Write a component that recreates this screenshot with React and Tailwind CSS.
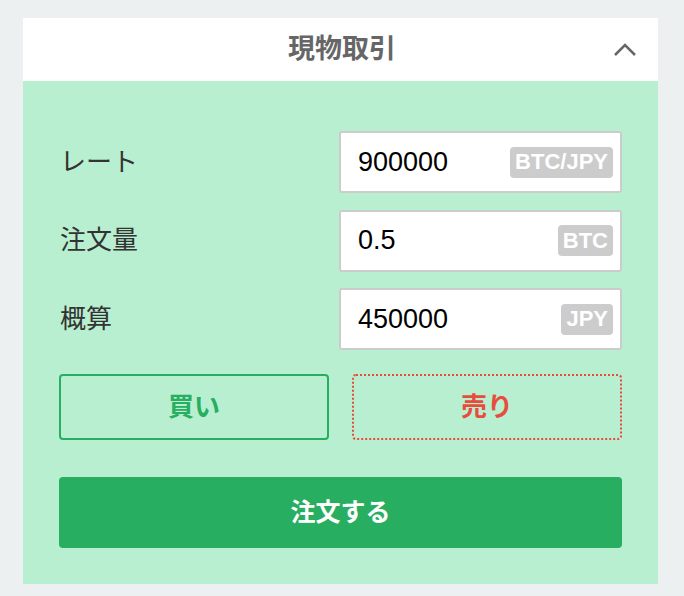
import React, { useState } from 'react';

const font = { fontFamily: '"Liberation Sans", "Noto Sans CJK JP", sans-serif' };

function Field({ label, value, unit }) {
  return (
    <div className="flex items-center justify-between">
      <label className="text-[26px] text-[#333] pl-[1px]">{label}</label>
      <div className="w-[283px] h-[62px] bg-white border-2 border-[#cccccc] rounded-[3px] flex items-center justify-between pl-[17px] pr-[7px]">
        <span className="text-[27px] text-black">{value}</span>
        <span className="bg-[#cccccc] text-white font-bold text-[22px] leading-none rounded-[4px] px-[5px] h-[31px] flex items-center">
          {unit}
        </span>
      </div>
    </div>
  );
}

export default function App() {
  const [side, setSide] = useState('buy');

  return (
    <div className="min-h-[596px] bg-[#ecf0f1] pt-[18px] px-[23px] pb-[12px]" style={font}>
      <div className="w-[635px]">
        <div className="h-[63px] bg-white relative flex items-center justify-center">
          <h1 className="text-[27px] font-bold text-[#666] pl-[3px]">現物取引</h1>
          <svg
            className="absolute right-[21px] top-[25px]"
            width="24"
            height="14"
            viewBox="0 0 24 14"
            fill="none"
            stroke="#666"
            strokeWidth="2.5"
          >
            <path d="M2 12 L12 2 L22 12" />
          </svg>
        </div>

        <div className="bg-[#b8efd0] px-[36px] pt-[50px] pb-[36px]">
          <div className="flex flex-col gap-[16.5px]">
            <Field label="レート" value="900000" unit="BTC/JPY" />
            <Field label="注文量" value="0.5" unit="BTC" />
            <Field label="概算" value="450000" unit="JPY" />
          </div>

          <div className="grid grid-cols-2 gap-[23px] mt-[24px]">
            <button
              onClick={() => setSide('buy')}
              className="h-[66px] border-2 border-[#27ae60] rounded-[4px] text-[#27ae60] text-[26px] font-bold"
            >
              買い
            </button>
            <button
              onClick={() => setSide('sell')}
              className="h-[66px] border-2 border-dotted border-[#e74c3c] rounded-[4px] text-[#e74c3c] text-[26px] font-bold"
            >
              売り
            </button>
          </div>

          <button className="w-full h-[71px] mt-[37px] bg-[#27ae60] rounded-[4px] text-white text-[25px] font-bold">
            注文する
          </button>
        </div>
      </div>
    </div>
  );
}
